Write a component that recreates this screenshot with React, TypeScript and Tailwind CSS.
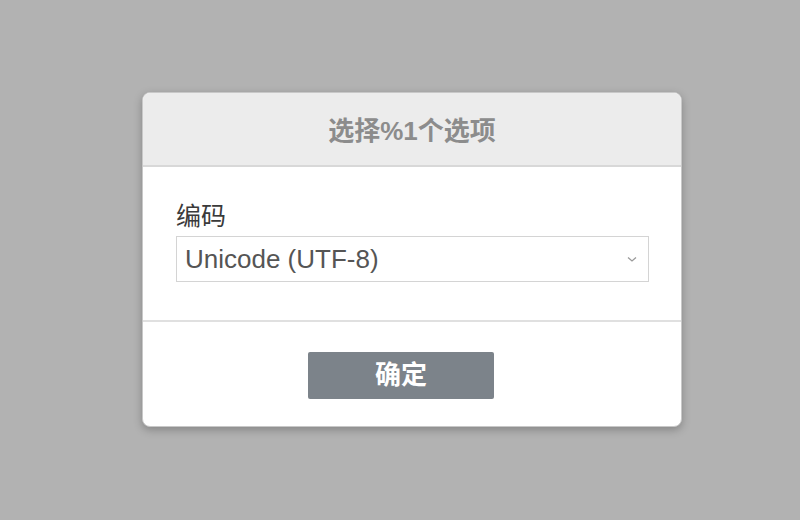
import React from "react";

const App = () => {
  return (
    <div
      className="w-[800px] h-[520px] bg-[#b2b2b2] pl-[142px] pt-[92px]"
      style={{ fontFamily: '"Liberation Sans", "Noto Sans CJK SC", sans-serif' }}
    >
      <div className="w-[540px] h-[335px] bg-white rounded-[8px] border border-[#c8c8c8] shadow-[0_3px_8px_rgba(0,0,0,0.25)] flex flex-col overflow-hidden">
        <div className="h-[74px] bg-[#ececec] border-b-2 border-[#d8d8d8] flex items-center justify-center">
          <span className="text-[26px] font-bold text-[#8c8c8c] pt-[4px]">选择%1个选项</span>
        </div>
        <div className="h-[155px] border-b-2 border-[#e0e0e0] px-[33px] pt-[31px]">
          <div className="text-[25px] leading-[36px] text-[#3a3a3a] mb-[2px]">编码</div>
          <div className="w-[473px] h-[46px] border border-[#d4d4d4] flex items-center justify-between pl-[8px] pr-[10px]">
            <span className="text-[26px] text-[#555555]">Unicode (UTF-8)</span>
            <svg width="12" height="8" viewBox="0 0 12 8" fill="none">
              <path d="M2 2.5 L6 6 L10 2.5" stroke="#9a9a9a" strokeWidth="1.3" />
            </svg>
          </div>
        </div>
        <div className="flex-1 pl-[165px] pt-[30px]">
          <button className="w-[186px] h-[47px] bg-[#7c838a] text-white text-[26px] font-bold rounded-[2px] flex items-center justify-center">
            确定
          </button>
        </div>
      </div>
    </div>
  );
};

export default App;
